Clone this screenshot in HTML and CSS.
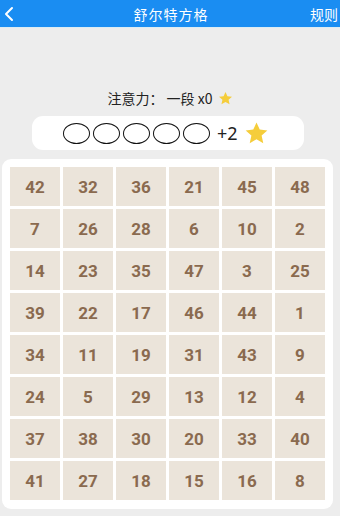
FILE: index.html
```html
<!DOCTYPE html>
<html lang="zh">
<head>
  <meta charset="UTF-8">
  <meta name="viewport" content="width=device-width, initial-scale=1.0">
  <title>舒尔特方格</title>
  <link rel="stylesheet" href="styles.css">
</head>
<body>
  <div class="topbar">
    <svg class="back" width="10" height="16" viewBox="0 0 10 16">
      <path d="M8 2 L2 8 L8 14" fill="none" stroke="#fff" stroke-width="2" stroke-linecap="round" stroke-linejoin="round"/>
    </svg>
    <div class="title">舒尔特方格</div>
    <div class="rules">规则</div>
  </div>

  <div class="level">注意力：&nbsp;一段 x0<svg class="star small" viewBox="0 0 24 24"><path d="M12 1.5 L15.1 8.2 L22.4 9 L16.9 14 L18.5 21.3 L12 17.6 L5.5 21.3 L7.1 14 L1.6 9 L8.9 8.2 Z" fill="#f5cd3b"/></svg></div>

  <div class="progress">
    <span class="dot"></span>
    <span class="dot"></span>
    <span class="dot"></span>
    <span class="dot"></span>
    <span class="dot"></span>
    <span class="bonus">+2</span>
    <svg class="star" viewBox="0 0 24 24"><path d="M12 1.5 L15.1 8.2 L22.4 9 L16.9 14 L18.5 21.3 L12 17.6 L5.5 21.3 L7.1 14 L1.6 9 L8.9 8.2 Z" fill="#f5cd3b"/></svg>
  </div>

  <div class="board">
    <div class="grid" id="grid"></div>
  </div>

  <script>
    const nums = [
      42, 32, 36, 21, 45, 48,
      7, 26, 28, 6, 10, 2,
      14, 23, 35, 47, 3, 25,
      39, 22, 17, 46, 44, 1,
      34, 11, 19, 31, 43, 9,
      24, 5, 29, 13, 12, 4,
      37, 38, 30, 20, 33, 40,
      41, 27, 18, 15, 16, 8
    ];
    const grid = document.getElementById('grid');
    nums.forEach(n => {
      const cell = document.createElement('div');
      cell.className = 'cell';
      cell.textContent = n;
      grid.appendChild(cell);
    });
  </script>
</body>
</html>
```

FILE: styles.css
```css
body {
  margin: 0;
  background-color: #ededed;
  font-family: "Noto Sans CJK SC", "Noto Sans", sans-serif;
  width: 340px;
  height: 516px;
  overflow: hidden;
}
.topbar {
  height: 27px;
  background-color: #1a8df2;
  border-bottom: 1px solid #dcecf4;
  display: flex;
  align-items: center;
  position: relative;
  color: #fff;
}
.back {
  margin-left: 4px;
}
.title {
  position: absolute;
  left: 0;
  right: 0;
  text-align: center;
  font-size: 14px;
  padding-left: 2px;
  letter-spacing: 1px;
}
.rules {
  margin-left: auto;
  margin-right: 2px;
  font-size: 14px;
}
.level {
  margin-top: 61px;
  height: 18px;
  display: flex;
  justify-content: center;
  align-items: center;
  font-size: 14px;
  color: #222;
}
.star {
  width: 25px;
  height: 25px;
}
.star.small {
  width: 15px;
  height: 15px;
  margin-left: 5px;
}
.progress {
  margin: 9px 36px 0 32px;
  height: 34px;
  background-color: #fff;
  border-radius: 11px;
  display: flex;
  align-items: center;
  padding-left: 31px;
}
.dot {
  width: 25px;
  height: 19px;
  border: 1.3px solid #111;
  border-radius: 50%;
  margin-right: 3px;
}
.bonus {
  font-family: "Noto Sans", sans-serif;
  font-size: 18px;
  color: #222;
  margin-left: 4px;
  margin-right: 6px;
}
.board {
  margin: 9px 7px 0 2px;
  background-color: #fff;
  border-radius: 9px;
  padding: 8px 8px 9px 8px;
}
.grid {
  display: grid;
  grid-template-columns: repeat(6, 1fr);
  grid-auto-rows: 39px;
  gap: 3px;
}
.cell {
  background-color: #ebe4da;
  display: flex;
  justify-content: center;
  align-items: center;
  font-family: Roboto, "Noto Sans", sans-serif;
  font-weight: 700;
  font-size: 17px;
  color: #8a6a4f;
}
```
